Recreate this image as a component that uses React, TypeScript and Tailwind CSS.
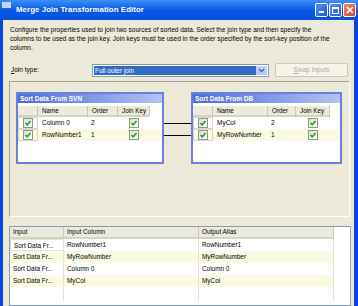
const font = "font-['Liberation_Sans',Arial,sans-serif]";

function Check() {
  return (
    <span className="inline-flex w-[10px] h-[10px] border border-[#8a9a7d] bg-gradient-to-br from-[#dcdcd4] to-white items-center justify-center">
      <svg width="8" height="8" viewBox="0 0 8 8">
        <path d="M1.5 4 L3.2 5.8 L6.5 2" stroke="#21a121" strokeWidth="1.6" fill="none" />
      </svg>
    </span>
  );
}

type Col = { w: string; label: string };

function SortBox({ title, cols, rows, boxW }: { title: string; cols: Col[]; rows: [string, string][]; boxW: string }) {
  return (
    <div className={`${boxW} h-[72px] border-2 border-[#6b7fdc] bg-white flex flex-col shrink-0`}>
      <div className="h-[9px] bg-gradient-to-r from-[#4e6dd8] to-[#b3c2f0] text-white font-bold text-[6.5px] leading-[9px] pl-[2px] whitespace-nowrap">
        {title}
      </div>
      <div className="pt-[3px]">
        <div className="flex h-[11px]">
          {cols.map((c, i) => (
            <div
              key={i}
              className={`${c.w} bg-[#ebeadb] border-b-2 border-[#d6d3c2] border-r border-r-[#c9c6b4] text-[6.3px] leading-[9px] pl-[4px] whitespace-nowrap`}
            >
              {c.label}
            </div>
          ))}
        </div>
        {rows.map((r, ri) => (
          <div key={ri} className={`flex h-[12px] ${ri % 2 ? "bg-[#fbfbe4]" : "bg-white"}`}>
            <div className={`${cols[0].w} flex items-center justify-center border border-[#d8d6cc]`}>
              <Check />
            </div>
            <div className={`${cols[1].w} text-[6.5px] leading-[12px] pl-[4px]`}>{r[0]}</div>
            <div className={`${cols[2].w} text-[6.5px] leading-[12px] pl-[3px]`}>{r[1]}</div>
            <div className={`${cols[3].w} flex items-center justify-center`}>
              <Check />
            </div>
          </div>
        ))}
      </div>
    </div>
  );
}

function WinButtons() {
  return (
    <div className="flex gap-[1px] pr-[2px]">
      <div className="w-[13px] h-[14px] rounded-[2px] border border-white bg-gradient-to-br from-[#5a8ef5] to-[#1c55e0] flex items-end pl-[3px] pb-[3px]">
        <div className="w-[5px] h-[2px] bg-white" />
      </div>
      <div className="w-[13px] h-[14px] rounded-[2px] border border-white bg-gradient-to-br from-[#5a8ef5] to-[#1c55e0] flex items-center justify-center">
        <div className="w-[7px] h-[7px] border border-white border-t-2" />
      </div>
      <div className="w-[13px] h-[14px] rounded-[2px] border border-white bg-gradient-to-br from-[#ef8a64] to-[#d4431c] flex items-center justify-center">
        <svg width="8" height="8" viewBox="0 0 8 8">
          <path d="M1 1 L7 7 M7 1 L1 7" stroke="white" strokeWidth="1.6" />
        </svg>
      </div>
    </div>
  );
}

const gridRows = [
  ["Sort Data Fr...", "RowNumber1", "RowNumber1"],
  ["Sort Data Fr...", "MyRowNumber", "MyRowNumber"],
  ["Sort Data Fr...", "Column 0", "Column 0"],
  ["Sort Data Fr...", "MyCol", "MyCol"],
];

export default function App() {
  return (
    <div className={`w-[358px] h-[306px] overflow-hidden flex flex-col bg-[#0a45da] ${font} text-black`}>
      <div className="h-[20px] shrink-0 bg-gradient-to-b from-[#3d8ff5] via-[#0a5ae8] to-[#0650dc] flex items-center">
        <div className="w-[9px] h-[6px] ml-[2px] mb-[10px] bg-[#c8d4ee]" />
        <div className="ml-[5px] text-white font-bold text-[7.8px] tracking-[0.1px] flex-1">
          Merge Join Transformation Editor
        </div>
        <WinButtons />
      </div>
      <div className="flex-1 ml-[3px] mr-[4px] bg-[#ece9d8] flex flex-col">
        <div className="pl-[7px] pt-[5px] text-[6.5px] leading-[9px] whitespace-nowrap">
          Configure the properties used to join two sources of sorted data. Select the join type and then specify the
          <br />
          columns to be used as the join key. Join keys must be used in the order specified by the sort-key position of the
          <br />
          column.
        </div>
        <div className="mt-[11px] flex items-center h-[14px] pl-[8px]">
          <div className="w-[81px] text-[6.5px]">
            <span className="underline">J</span>oin type:
          </div>
          <div className="w-[177px] h-[13px] border border-[#7f9db9] bg-white flex p-[1px]">
            <div className="flex-1 bg-[#316ac5] text-white text-[6.5px] leading-[9px] pl-[1px]">Full outer join</div>
            <div className="w-[11px] bg-gradient-to-b from-[#c6d5fd] to-[#b1c6f7] flex items-center justify-center">
              <svg width="7" height="5" viewBox="0 0 7 5">
                <path d="M1 1 L3.5 3.5 L6 1" stroke="#4d6185" strokeWidth="1.4" fill="none" />
              </svg>
            </div>
          </div>
          <div className="ml-[6px] w-[73px] h-[14px] border border-[#c9c7ba] rounded-[2px] bg-[#f5f4ea] text-[#aca899] text-[6.5px] flex items-center justify-center">
            <span className="underline">S</span>wap Inputs
          </div>
        </div>
        <div className="mt-[4px] ml-[6px] mr-[4px] h-[136px] border border-[#a5a28f] border-r-white border-b-white flex pl-[6px] pt-[10px]">
          <SortBox
            title="Sort Data From SVN"
            boxW="w-[148px]"
            cols={[
              { w: "w-[20px]", label: "" },
              { w: "w-[50px]", label: "Name" },
              { w: "w-[30px]", label: "Order" },
              { w: "w-[32px]", label: "Join Key" },
            ]}
            rows={[
              ["Column 0", "2"],
              ["RowNumber1", "1"],
            ]}
          />
          <div className="w-[27px] shrink-0 pt-[31px] flex flex-col gap-[11px]">
            <div className="h-[1px] bg-black" />
            <div className="h-[1px] bg-black" />
          </div>
          <SortBox
            title="Sort Data From DB"
            boxW="w-[151px]"
            cols={[
              { w: "w-[20px]", label: "" },
              { w: "w-[55px]", label: "Name" },
              { w: "w-[28px]", label: "Order" },
              { w: "w-[34px]", label: "Join Key" },
            ]}
            rows={[
              ["MyCol", "2"],
              ["MyRowNumber", "1"],
            ]}
          />
        </div>
        <div className="mt-[9px] ml-[6px] mr-[3px] flex-1 border border-[#7f9db9] border-r-[#aca899] bg-white">
          <div className="flex h-[12px]">
            <div className="w-[54px] bg-[#ebeadb] border-b-2 border-[#d6d3c2] border-r border-r-[#c9c6b4] text-[6.4px] leading-[10px] pl-[3px]">Input</div>
            <div className="w-[135px] bg-[#ebeadb] border-b-2 border-[#d6d3c2] border-r border-r-[#c9c6b4] text-[6.4px] leading-[10px] pl-[3px]">Input Column</div>
            <div className="w-[135px] bg-[#ebeadb] border-b-2 border-[#d6d3c2] border-r border-r-[#c9c6b4] text-[6.4px] leading-[10px] pl-[3px]">Output Alias</div>
          </div>
          {gridRows.map((r, i) => (
            <div key={i} className={`flex h-[12px] w-[324px] ${i % 2 ? "bg-[#fbfbe4]" : "bg-white"}`}>
              <div className={`w-[54px] text-[6.4px] leading-[12px] pl-[3px] border-r border-[#e3e2da] ${i === 0 ? "border border-[#777]" : ""}`}>{r[0]}</div>
              <div className="w-[135px] text-[6.4px] leading-[12px] pl-[3px] border-r border-[#e3e2da]">{r[1]}</div>
              <div className="w-[135px] text-[6.4px] leading-[12px] pl-[3px] border-r border-[#e3e2da]">{r[2]}</div>
            </div>
          ))}
          <div className="flex h-[14px] w-[324px]">
            <div className="w-[54px] border-r border-[#e3e2da]" />
            <div className="w-[135px] border-r border-[#e3e2da]" />
            <div className="w-[135px] border-r border-[#e3e2da]" />
          </div>
        </div>
      </div>
    </div>
  );
}
